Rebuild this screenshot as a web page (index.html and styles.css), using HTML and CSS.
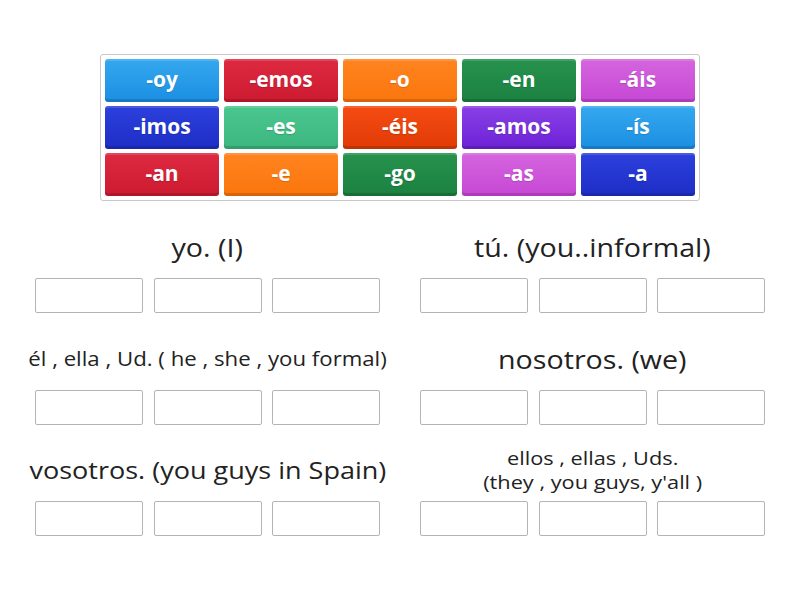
FILE: index.html
```html
<!DOCTYPE html>
<html lang="es">
<head>
<meta charset="utf-8">
<title>Group sort</title>
<link rel="stylesheet" href="styles.css">
</head>
<body>
<div class="page">
  <div class="bank">
    <div class="tile c-blue">-oy</div>
    <div class="tile c-red">-emos</div>
    <div class="tile c-orange">-o</div>
    <div class="tile c-green">-en</div>
    <div class="tile c-pink">-áis</div>
    <div class="tile c-navy">-imos</div>
    <div class="tile c-teal">-es</div>
    <div class="tile c-flame">-éis</div>
    <div class="tile c-purple">-amos</div>
    <div class="tile c-blue">-ís</div>
    <div class="tile c-red">-an</div>
    <div class="tile c-orange">-e</div>
    <div class="tile c-green">-go</div>
    <div class="tile c-pink">-as</div>
    <div class="tile c-navy">-a</div>
  </div>

  <div class="groups">
    <div class="group">
      <div class="label"><span class="text big">yo. (I)</span></div>
      <div class="slots"><div class="slot"></div><div class="slot"></div><div class="slot"></div></div>
    </div>
    <div class="group">
      <div class="label"><span class="text big">tú. (you..informal)</span></div>
      <div class="slots"><div class="slot"></div><div class="slot"></div><div class="slot"></div></div>
    </div>
    <div class="group">
      <div class="label"><span class="text fit-el">él , ella , Ud. ( he , she , you formal)</span></div>
      <div class="slots"><div class="slot"></div><div class="slot"></div><div class="slot"></div></div>
    </div>
    <div class="group">
      <div class="label"><span class="text big">nosotros. (we)</span></div>
      <div class="slots"><div class="slot"></div><div class="slot"></div><div class="slot"></div></div>
    </div>
    <div class="group">
      <div class="label"><span class="text fit-vos">vosotros. (you guys in Spain)</span></div>
      <div class="slots"><div class="slot"></div><div class="slot"></div><div class="slot"></div></div>
    </div>
    <div class="group">
      <div class="label"><span class="text small">ellos , ellas , Uds.<br>(they , you guys, y'all )</span></div>
      <div class="slots"><div class="slot"></div><div class="slot"></div><div class="slot"></div></div>
    </div>
  </div>
</div>
</body>
</html>
```

FILE: styles.css
```css
* { box-sizing: border-box; }

html, body {
  margin: 0;
  padding: 0;
  background: #ffffff;
}

body {
  font-family: "Open Sans", "DejaVu Sans", sans-serif;
  color: #222222;
  width: 800px;
  height: 600px;
  overflow: hidden;
}

.page {
  padding-top: 54px;
}

.bank {
  width: 600px;
  margin: 0 auto;
  border: 1px solid #c8c8c8;
  border-radius: 3px;
  padding: 4px;
  display: grid;
  grid-template-columns: repeat(5, 1fr);
  grid-auto-rows: 43px;
  gap: 4px 5px;
}

.tile {
  display: flex;
  align-items: center;
  justify-content: center;
  color: #ffffff;
  font-weight: 700;
  font-size: 21px;
  border-radius: 3px;
  padding-bottom: 3px;
  text-shadow: 0 1px 1px rgba(0, 0, 0, 0.15);
  box-shadow: inset 0 -3px 0 rgba(0, 0, 0, 0.14), inset 0 2px 0 rgba(255, 255, 255, 0.14);
}

.c-blue   { background: linear-gradient(#36a8ef, #1a8ee2); }
.c-red    { background: linear-gradient(#de2a40, #cc1a30); }
.c-orange { background: linear-gradient(#ff8420, #fb750c); }
.c-green  { background: linear-gradient(#26924d, #1c8141); }
.c-pink   { background: linear-gradient(#d565de, #c647d5); }
.c-navy   { background: linear-gradient(#2c40dc, #1e2ec6); }
.c-teal   { background: linear-gradient(#4cc690, #3bb77e); }
.c-flame  { background: linear-gradient(#f54c12, #e03a06); }
.c-purple { background: linear-gradient(#8a40e4, #6c22d6); }

.groups {
  margin-top: 21px;
  padding: 0 35px;
  display: grid;
  grid-template-columns: 345px 345px;
  column-gap: 40px;
  row-gap: 20.5px;
}

.group {
  display: flex;
  flex-direction: column;
  gap: 6px;
}

.label {
  height: 50px;
  display: flex;
  align-items: center;
  justify-content: center;
  text-align: center;
  white-space: nowrap;
}

.text {
  display: inline-block;
  transform: scaleX(1.145);
}

.big {
  font-size: 25px;
  line-height: 32px;
}

.fit-vos {
  font-size: 23.6px;
  line-height: 32px;
}

.fit-el {
  font-size: 19.4px;
  line-height: 24px;
}

.small {
  font-size: 19px;
  line-height: 24px;
}

.slots {
  display: flex;
  justify-content: space-between;
}

.slot {
  width: 108px;
  height: 35px;
  border: 1px solid #b4b4b4;
  border-radius: 2px;
  background: #ffffff;
}
```
